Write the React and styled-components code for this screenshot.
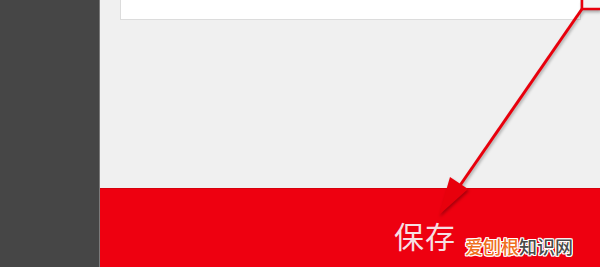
import React from 'react';
import styled, {createGlobalStyle} from 'styled-components';

const GlobalStyle = createGlobalStyle`
  html, body {
    margin: 0;
    padding: 0;
    width: 600px;
    height: 267px;
    overflow: hidden;
  }
  body {
    font-family: "Noto Sans CJK SC", "Noto Sans", sans-serif;
  }
`;

const Page = styled.div`
  position: relative;
  display: flex;
  width: 600px;
  height: 267px;
  overflow: hidden;
`;

const Sidebar = styled.div`
  width: 99px;
  flex-shrink: 0;
  background: #464646;
  border-right: 1px solid #7a7a7a;
`;

const Main = styled.div`
  flex: 1;
  display: flex;
  flex-direction: column;
  background: #f0f0f0;
`;

const CardRow = styled.div`
  display: flex;
  padding-left: 20px;
`;

const Card = styled.div`
  width: 459px;
  height: 19px;
  background: #ffffff;
  border: 1px solid #dcdcdc;
  border-top: none;
`;

const Spacer = styled.div`
  flex: 1;
`;

const SaveBar = styled.div`
  height: 79px;
  display: flex;
  align-items: flex-start;
  padding: 28px 0 0 294px;
  box-sizing: border-box;
  background: #ee0010;
  border-top: 1px solid #d6000c;
`;

const SaveLabel = styled.span`
  font-size: 30px;
  line-height: 36px;
  color: #f6dfe2;
  letter-spacing: 1px;
`;

const Overlay = styled.svg`
  position: absolute;
  left: 0;
  top: 0;
  pointer-events: none;
  filter: drop-shadow(1px 2px 1.5px rgba(0, 0, 0, 0.3));
`;

const Watermark = styled.div`
  position: absolute;
  left: 465px;
  top: 235px;
  display: flex;
  font-size: 18px;
  line-height: 22px;
  font-weight: 500;
  text-shadow: 1px 0 0 #fff, -1px 0 0 #fff, 0 1px 0 #fff, 0 -1px 0 #fff,
    1px 1px 0 #fff, -1px -1px 0 #fff, 1px -1px 0 #fff, -1px 1px 0 #fff;
`;

const MarkPart = styled.span`
  color: ${p => p.color};
`;

const App = () => (
  <>
    <GlobalStyle />
    <Page>
      <Sidebar />
      <Main>
        <CardRow>
          <Card />
        </CardRow>
        <Spacer />
        <SaveBar>
          <SaveLabel>保存</SaveLabel>
        </SaveBar>
      </Main>
      <Overlay width="600" height="267" viewBox="0 0 600 267">
        <rect x="582" y="-10" width="30" height="19" fill="#f4f4f4" stroke="#e8000c" strokeWidth="2.5" />
        <line x1="582" y1="9" x2="452" y2="197" stroke="#e8000c" strokeWidth="3" />
        <polygon points="439,215 450,177 468,189" fill="#e8000c" />
      </Overlay>
      <Watermark>
        <MarkPart color="#f0701e">爱刨根</MarkPart>
        <MarkPart color="#4a4a4a">知识网</MarkPart>
      </Watermark>
    </Page>
  </>
);

export default App;
